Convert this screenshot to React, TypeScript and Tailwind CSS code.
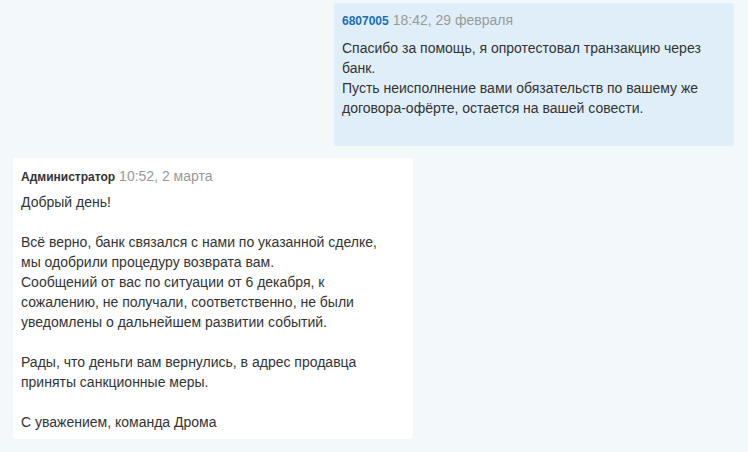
import React from "react";

const font = { fontFamily: '"Liberation Sans", Arial, sans-serif' };

export default function App() {
  return (
    <div
      className="w-[748px] h-[452px] overflow-hidden bg-[#f3f8fb] px-[13px] pt-[3px] flex flex-col gap-[12px] text-[#333]"
      style={font}
    >
      <div className="self-end mr-[1px] w-[400px] rounded-[3px] bg-[#dfeef8] px-[8px] pt-[9px] pb-[28px]">
        <div className="flex items-baseline gap-[4px] leading-[16px] whitespace-nowrap">
          <span className="text-[12px] font-bold text-[#1d6db5]">6807005</span>
          <span className="text-[14px] text-[#9a9a9a]">18:42, 29 февраля</span>
        </div>
        <div className="mt-[9px] text-[14px] leading-[20px] whitespace-nowrap">
          Спасибо за помощь, я опротестовал транзакцию через
          <br />
          банк.
          <br />
          Пусть неисполнение вами обязательств по вашему же
          <br />
          договора-офёрте, остается на вашей совести.
        </div>
      </div>

      <div className="self-start w-[400px] rounded-[3px] bg-white px-[8px] pt-[10px] pb-[7px]">
        <div className="flex items-baseline gap-[4px] leading-[16px] whitespace-nowrap">
          <span className="text-[12px] font-bold text-[#333]">Администратор</span>
          <span className="text-[14px] text-[#9a9a9a]">10:52, 2 марта</span>
        </div>
        <div className="mt-[7px] text-[14px] leading-[20px] whitespace-nowrap">
          Добрый день!
          <br />
          <br />
          Всё верно, банк связался с нами по указанной сделке,
          <br />
          мы одобрили процедуру возврата вам.
          <br />
          Сообщений от вас по ситуации от 6 декабря, к
          <br />
          сожалению, не получали, соответственно, не были
          <br />
          уведомлены о дальнейшем развитии событий.
          <br />
          <br />
          Рады, что деньги вам вернулись, в адрес продавца
          <br />
          приняты санкционные меры.
          <br />
          <br />
          С уважением, команда Дрома
        </div>
      </div>
    </div>
  );
}
